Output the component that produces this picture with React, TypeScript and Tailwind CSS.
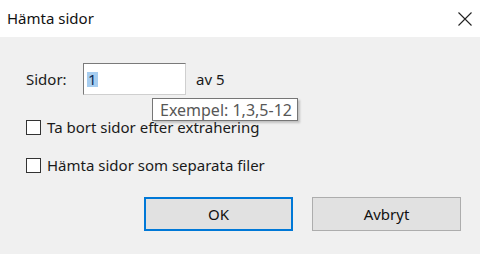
export default function App() {
  return (
    <div className="w-[480px] h-[254px] flex flex-col font-['Noto_Sans',sans-serif] text-[15px] leading-none text-[#1a1a1a] overflow-hidden">
      {/* Title bar */}
      <div className="h-[37px] shrink-0 bg-white flex items-center justify-between pl-[7px] pr-[4px]">
        <span className="text-[#111]">Hämta sidor</span>
        <svg width="16" height="16" viewBox="0 0 16 16" className="mr-[3px] mt-[1px]">
          <path d="M1.5 1.5 L14.5 14.5 M14.5 1.5 L1.5 14.5" stroke="#222" strokeWidth="1.1" fill="none" />
        </svg>
      </div>

      {/* Body */}
      <div className="flex-1 bg-[#f0f0f0] relative pt-[26px] pl-[26px]">
        <div className="flex items-center h-[32px]">
          <span className="w-[57px]">Sidor:</span>
          <div className="w-[103px] h-[32px] bg-white border border-t-[#7a7a7a] border-l-[#7a7a7a] border-r-[#cfcfcf] border-b-[#cfcfcf] flex items-center pl-[3px]">
            <span className="bg-[#a6cdf0] text-[#0b2a55] h-[15px] px-[1px] flex items-center">1</span>
          </div>
          <span className="ml-[10px]">av 5</span>
        </div>

        <div className="flex items-center h-[16px] mt-[24px]">
          <span className="w-[15px] h-[15px] border border-[#333] bg-white shrink-0" />
          <span className="ml-[6px]">Ta bort sidor efter extrahering</span>
        </div>

        <div className="flex items-center h-[16px] mt-[22px]">
          <span className="w-[15px] h-[15px] border border-[#333] bg-white shrink-0" />
          <span className="ml-[6px]">Hämta sidor som separata filer</span>
        </div>

        <div className="flex justify-end gap-[19px] pr-[19px] mt-[24px]">
          <button className="w-[149px] h-[34px] bg-[#e1e1e1] border-2 border-[#0078d7] text-[#111]">OK</button>
          <button className="w-[149px] h-[34px] bg-[#e1e1e1] border border-[#adadad] text-[#111]">Avbryt</button>
        </div>

        {/* Tooltip */}
        <div className="absolute left-[152px] top-[61px] h-[23px] pl-[7px] pr-[5px] bg-white border border-[#767676] shadow-[2px_2px_2px_rgba(0,0,0,0.2)] flex items-center text-[16px] text-[#575757]">
          Exempel: 1,3,5-12
        </div>
      </div>
    </div>
  );
}
